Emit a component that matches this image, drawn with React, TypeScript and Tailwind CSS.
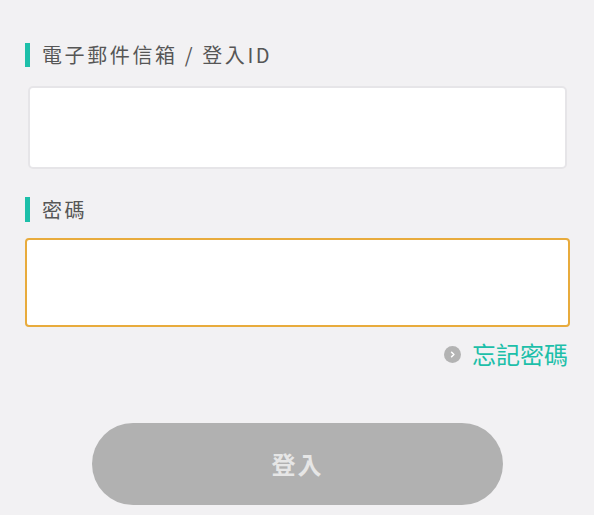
import React from "react";

export default function App() {
  const font = { fontFamily: '"Noto Sans CJK TC", "Noto Sans", sans-serif' };
  return (
    <div className="flex w-[600px] h-[515px] overflow-hidden" style={font}>
      <div className="w-[594px] h-full bg-[#f2f1f3] flex flex-col pl-[25px] pt-[43px]">
        <div className="flex items-center h-[24px] gap-[12px]">
          <div className="w-[5px] h-[24px] bg-[#1dbfa9]" />
          <span className="text-[20px] leading-none tracking-[2.6px] text-[#565656]">電子郵件信箱 / 登入ID</span>
        </div>
        <div className="mt-[19px] ml-[3px] w-[539px] h-[83px] bg-white rounded-[5px] border-2 border-[#e6e5e8]" />
        <div className="mt-[28px] flex items-center h-[25px] gap-[12px]">
          <div className="w-[5px] h-[25px] bg-[#1dbfa9]" />
          <span className="text-[20px] leading-none tracking-[2.6px] text-[#565656]">密碼</span>
        </div>
        <div className="mt-[16px] w-[545px] h-[89px] bg-white rounded-[4px] border-2 border-[#e8ab3c]" />
        <div className="mt-[12px] h-[30px] w-[543px] flex items-center justify-end gap-[11px]">
          <div className="w-[17px] h-[17px] rounded-full bg-[#b3b3b3] flex items-center justify-center">
            <svg width="9" height="9" viewBox="0 0 10 10">
              <path d="M4 2.5 L6.5 5 L4 7.5" fill="none" stroke="#ffffff" strokeWidth="1.8" strokeLinecap="round" strokeLinejoin="round" />
            </svg>
          </div>
          <span className="text-[24px] leading-none tracking-[0px] text-[#1dbfa9]">忘記密碼</span>
        </div>
        <div className="mt-[54px] ml-[67px] w-[411px] h-[82px] rounded-full bg-[#b1b1b1] flex items-center justify-center">
          <span className="text-[24px] font-bold text-[#e6e6e6] tracking-[2px]">登入</span>
        </div>
      </div>
      <div className="flex-1 bg-white" />
    </div>
  );
}
